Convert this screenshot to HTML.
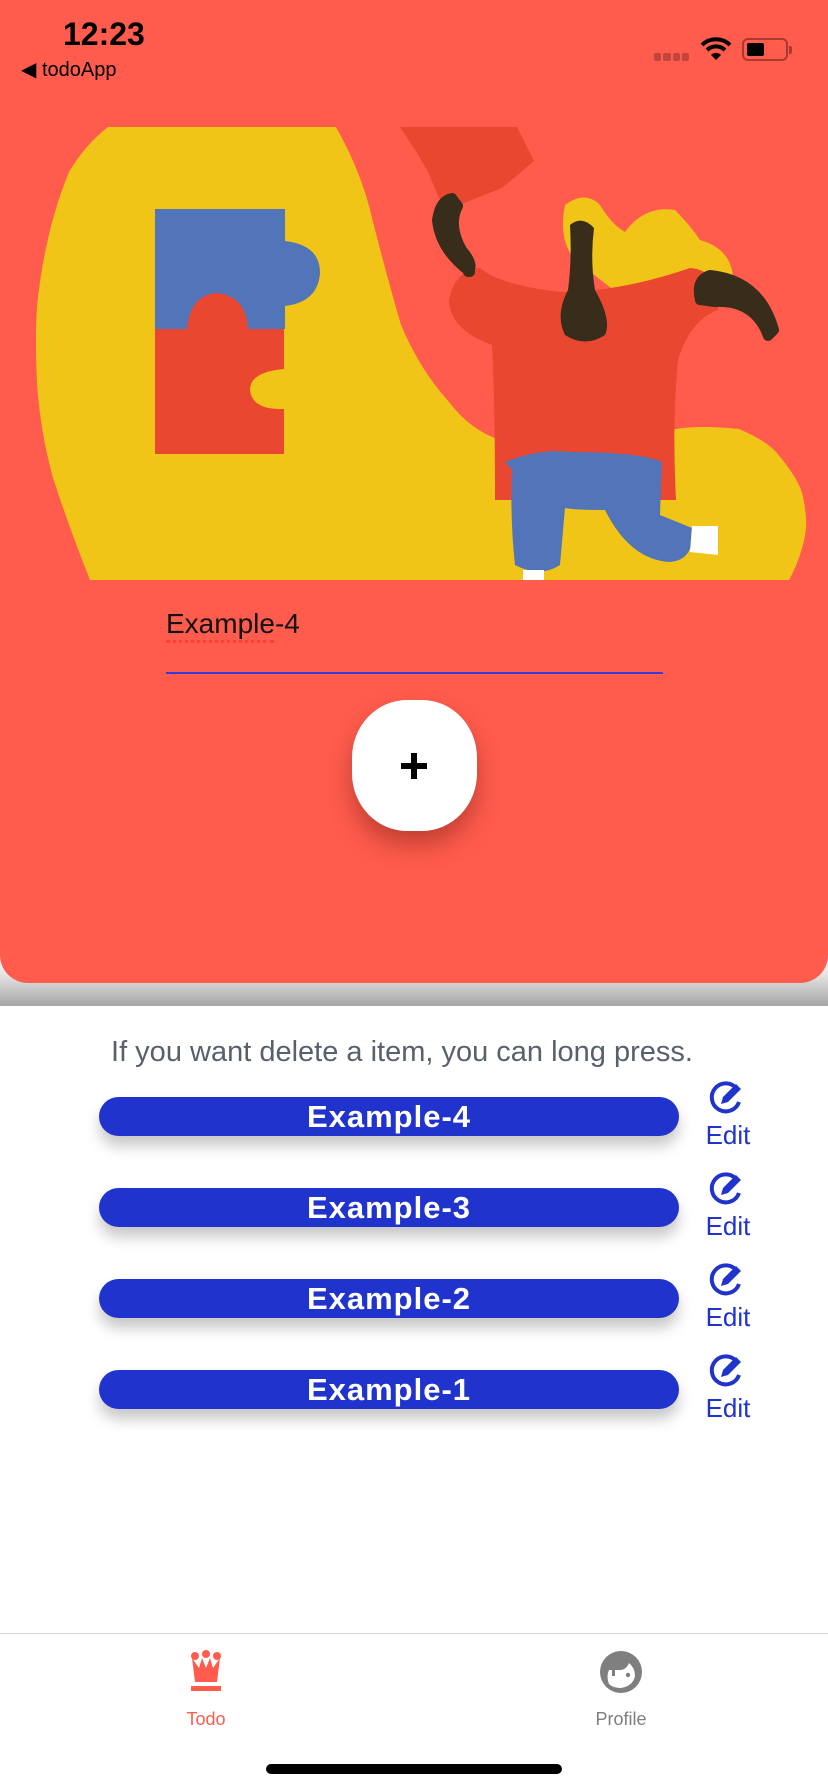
<!DOCTYPE html>
<html><head><meta charset="utf-8"><style>
*{margin:0;padding:0;box-sizing:border-box}
body{width:828px;height:1792px;background:#fff;font-family:"Liberation Sans",sans-serif;position:relative;overflow:hidden}
.abs{position:absolute}
#card{left:0;top:0;width:828px;height:983px;background:#FF5C4D;border-radius:0 0 28px 28px;z-index:2}
#shadow{left:0;top:950px;width:828px;height:56px;background:linear-gradient(#f4f4f4,#e8e8e8 40%,#a5a5a5);z-index:1}
.btn{left:99px;width:580px;height:39px;background:#2033cc;border-radius:20px;color:#fff;font-weight:bold;font-size:31px;letter-spacing:1px;text-align:center;line-height:39px;box-shadow:0 10px 14px rgba(0,0,0,0.22)}
.edit{left:701px;width:54px;text-align:center;color:#2033cc;font-size:26px}
</style></head><body>
<div id="shadow" class="abs"></div>
<div id="card" class="abs">
  <div class="abs" style="left:63px;top:16px;font-size:32px;font-weight:bold;color:#000">12:23</div>
  <div class="abs" style="left:21px;top:57px;font-size:20px;color:#000">◀ todoApp</div>
  <div class="abs" style="left:654px;top:53px;width:35px;height:8px;display:flex;gap:2px">
    <span style="flex:1;background:#c0463c;border-radius:2px"></span><span style="flex:1;background:#c0463c;border-radius:2px"></span><span style="flex:1;background:#c0463c;border-radius:2px"></span><span style="flex:1;background:#c0463c;border-radius:2px"></span></div>
  <svg class="abs" style="left:700px;top:37px" width="32" height="24" viewBox="0 0 32 24"><path d="M2 8a20 20 0 0 1 28 0" stroke="#000" stroke-width="4" fill="none"/><path d="M7 13a13 13 0 0 1 18 0" stroke="#000" stroke-width="4" fill="none"/><path d="M11 18l5 5 5-5a7 7 0 0 0-10 0z" fill="#000"/></svg>
  <div class="abs" style="left:742px;top:38px;width:46px;height:23px;border:2px solid #a83a30;border-radius:6px"><div style="position:absolute;left:3px;top:3px;width:17px;height:13px;background:#000;border-radius:2px"></div></div>
  <div class="abs" style="left:789px;top:46px;width:3px;height:8px;background:#a83a30;border-radius:0 2px 2px 0"></div>
  <svg class="abs" style="left:0;top:0" width="828" height="600" viewBox="0 0 828 600">
    <path d="M108 127 L336 127 Q360 170 370 210 Q385 270 401 325 Q420 370 449 402 Q470 430 500 440 L676 429 Q700 425 739 429 Q765 440 776 452 Q800 480 803 497 Q808 520 805 536 Q800 560 789 580 L90 580 Q70 530 53 478 Q40 430 37 383 Q35 340 37 306 Q45 230 69 172 Q85 145 108 127Z" fill="#F1C518"/>
    <path d="M155 209 L285 209 L285 241 Q320 245 320 273 Q318 302 285 306 L285 329 L155 329Z" fill="#5175B8"/>
    <path d="M155 329 L187 329 Q190 295 217 293 Q246 296 248 329 L284 329 L284 369 Q250 372 250 390 Q252 410 284 409 L284 454 L155 454Z" fill="#EA4730"/>
    <path d="M400 127 L517 127 L534 161 L502 188 L454 207 L441 203 L428 172 L417 153Z" fill="#EA4730"/>
    <path d="M565 205 Q585 190 600 205 Q612 225 625 232 Q645 205 675 210 Q690 225 700 240 Q735 250 733 285 L620 295 L575 260 Q558 240 565 205Z" fill="#F1C518"/>
    <path d="M449 300 Q455 270 480 268 Q500 285 560 292 Q620 292 690 268 Q720 270 718 310 Q690 320 678 360 Q672 420 676 500 L495 500 Q495 400 492 345 Q450 330 449 300Z" fill="#EA4730"/>
    <path d="M470 272 Q440 250 437 220 Q440 200 452 198 L458 206 Q448 225 462 250 Q475 265 468 272Z" fill="#382C1A" stroke="#382C1A" stroke-width="10" stroke-linejoin="round"/>
    <path d="M700 300 Q695 280 710 275 Q760 280 774 330 L768 336 Q755 300 715 302Z" fill="#382C1A" stroke="#382C1A" stroke-width="10" stroke-linejoin="round"/>
    <path d="M570 225 Q582 215 594 228 Q590 260 595 290 Q612 320 605 335 Q585 348 565 335 Q555 315 568 290 Q572 260 570 225Z" fill="#382C1A"/>
    <path d="M505 462 Q540 448 570 452 Q640 452 662 462 L660 515 L692 528 Q695 560 670 562 Q630 560 605 510 Q575 510 565 508 L560 565 Q540 578 515 565 Q510 520 512 470Z" fill="#5175B8"/>
    <path d="M692 526 L718 526 L718 555 L690 552Z" fill="#fff"/>
    <path d="M523 570 L544 570 L544 580 L523 580Z" fill="#fff"/>
  </svg>
  <div class="abs" style="left:166px;top:608px;font-size:28px;color:#111">Example-4</div>
  <div class="abs" style="left:166px;top:640px;width:108px;border-bottom:3px dotted #ff3b3b"></div>
  <div class="abs" style="left:166px;top:672px;width:497px;height:2px;background:#3a3ad8"></div>
  <div class="abs" style="left:352px;top:700px;width:125px;height:131px;background:#fff;border-radius:44%;box-shadow:0 14px 24px rgba(120,30,20,0.45)"></div>
  <svg class="abs" style="left:400px;top:752px" width="28" height="28" viewBox="0 0 28 28"><rect x="11" y="1" width="6" height="26" fill="#000"/><rect x="1" y="11" width="26" height="6" fill="#000"/></svg>
</div>
<div class="abs" style="left:-12px;width:828px;top:1036px;text-align:center;font-size:29px;color:#58606e">If you want delete a item, you can long press.</div>
<div class="abs btn" style="top:1097px">Example-4</div>
<div class="abs btn" style="top:1188px">Example-3</div>
<div class="abs btn" style="top:1279px">Example-2</div>
<div class="abs btn" style="top:1370px">Example-1</div>
<svg width="0" height="0" style="position:absolute"><defs><g id="ei"><path d="M30 9 A14 14 0 1 0 32 22" stroke="#2033cc" stroke-width="4" fill="none"/><path d="M14 24 L16 17 L29 4 L34 9 L21 22Z" fill="#2033cc"/></g></defs></svg>
<svg class="abs" style="left:707px;top:1080px" width="38" height="38" viewBox="0 0 38 38"><use href="#ei"/></svg>
<svg class="abs" style="left:707px;top:1171px" width="38" height="38" viewBox="0 0 38 38"><use href="#ei"/></svg>
<svg class="abs" style="left:707px;top:1262px" width="38" height="38" viewBox="0 0 38 38"><use href="#ei"/></svg>
<svg class="abs" style="left:707px;top:1353px" width="38" height="38" viewBox="0 0 38 38"><use href="#ei"/></svg>
<div class="abs edit" style="top:1120px">Edit</div>
<div class="abs edit" style="top:1211px">Edit</div>
<div class="abs edit" style="top:1302px">Edit</div>
<div class="abs edit" style="top:1393px">Edit</div>
<div class="abs" style="left:0;top:1633px;width:828px;height:1px;background:#d6d6d6"></div>
<svg class="abs" style="left:189px;top:1650px" width="34" height="42" viewBox="0 0 34 42"><circle cx="6" cy="6" r="4" fill="#FF5C4D"/><circle cx="17" cy="4" r="4" fill="#FF5C4D"/><circle cx="28" cy="6" r="4" fill="#FF5C4D"/><path d="M3 8 L10 18 L13 8 L17 18 L21 8 L24 18 L31 8 L28 32 L6 32Z" fill="#FF5C4D"/><rect x="2" y="36" width="30" height="5" fill="#FF5C4D"/></svg>
<div class="abs" style="left:150px;top:1709px;width:112px;text-align:center;font-size:18px;color:#FF5C4D">Todo</div>
<svg class="abs" style="left:599px;top:1650px" width="44" height="44" viewBox="0 0 44 44"><circle cx="22" cy="22" r="21" fill="#7f7f7f"/><path d="M10 34 Q7 26 10 20 L13 20 L13 26 L16 26 L16 20 L21 20 Q27 20 30 13 Q36 18 36 26 Q34 36 22 38 Q14 38 10 34Z" fill="#fff"/><circle cx="29" cy="25" r="2.2" fill="#7f7f7f"/></svg>
<div class="abs" style="left:565px;top:1709px;width:112px;text-align:center;font-size:18px;color:#7f7f7f">Profile</div>
<div class="abs" style="left:266px;top:1764px;width:296px;height:10px;background:#000;border-radius:5px"></div>
</body></html>
